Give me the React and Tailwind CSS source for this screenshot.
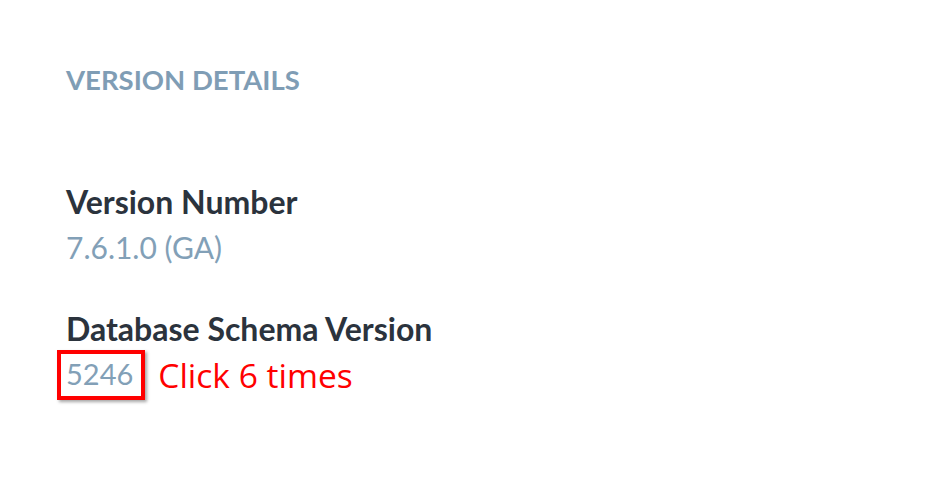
export default function App() {
  return (
    <div className="w-[925px] h-[503px] bg-white pl-[66px] pt-[66px] font-['Lato',sans-serif]">
      <h2 className="text-[27.5px] leading-[28px] font-bold text-[#7f9db5]">VERSION DETAILS</h2>

      <div className="mt-[92px]">
        <div className="text-[32px] leading-[32px] font-bold text-[#2b333d]">Version Number</div>
        <div className="mt-[14px] text-[30px] leading-[30px] text-[#82a0b7]">7.6.1.0 (GA)</div>
      </div>

      <div className="mt-[51px]">
        <div className="text-[32px] leading-[32px] font-bold text-[#2b333d]">Database Schema Version</div>
        <div className="flex items-center -ml-[9px] mt-[5px]">
          <span className="border-[4px] border-[#ff0000] pl-[5px] pr-[8px] pb-[2px] text-[29px] leading-[40px] text-[#82a0b7] shadow-[2px_2px_3px_rgba(0,0,0,0.35)]">5246</span>
          <span className="ml-[13px] text-[33.5px] leading-[44px] text-[#ff0000] font-['Open_Sans',sans-serif]">Click 6 times</span>
        </div>
      </div>
    </div>
  );
}
